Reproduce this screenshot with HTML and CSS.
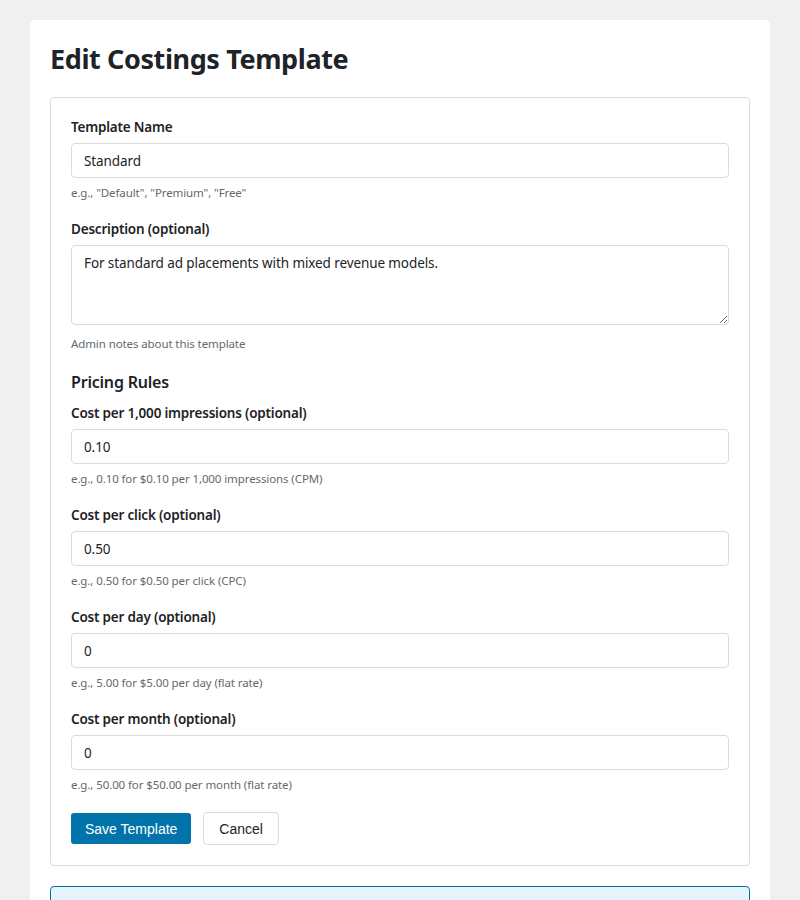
FILE: index.html
```html
<!DOCTYPE html>
<html lang="en">
<head>
<meta charset="utf-8">
<title>Edit Costings Template</title>
<link rel="stylesheet" href="styles.css">
</head>
<body>
<div class="wrap">
  <div class="card">
    <h1 class="page-title">Edit Costings Template</h1>
    <form class="panel">
      <div class="field">
        <label class="field-label" for="tpl-name">Template Name</label>
        <input class="text-input" id="tpl-name" type="text" value="Standard">
        <p class="hint">e.g., "Default", "Premium", "Free"</p>
      </div>
      <div class="field">
        <label class="field-label" for="tpl-desc">Description (optional)</label>
        <textarea class="text-area" id="tpl-desc">For standard ad placements with mixed revenue models.</textarea>
        <p class="hint hint-area">Admin notes about this template</p>
      </div>
      <h3 class="section-title">Pricing Rules</h3>
      <div class="field">
        <label class="field-label" for="cpm">Cost per 1,000 impressions (optional)</label>
        <input class="text-input" id="cpm" type="text" value="0.10">
        <p class="hint">e.g., 0.10 for $0.10 per 1,000 impressions (CPM)</p>
      </div>
      <div class="field">
        <label class="field-label" for="cpc">Cost per click (optional)</label>
        <input class="text-input" id="cpc" type="text" value="0.50">
        <p class="hint">e.g., 0.50 for $0.50 per click (CPC)</p>
      </div>
      <div class="field">
        <label class="field-label" for="cpd">Cost per day (optional)</label>
        <input class="text-input" id="cpd" type="text" value="0">
        <p class="hint">e.g., 5.00 for $5.00 per day (flat rate)</p>
      </div>
      <div class="field">
        <label class="field-label" for="cpmo">Cost per month (optional)</label>
        <input class="text-input" id="cpmo" type="text" value="0">
        <p class="hint">e.g., 50.00 for $50.00 per month (flat rate)</p>
      </div>
      <div class="actions">
        <button type="button" class="btn btn-primary">Save Template</button>
        <button type="button" class="btn btn-secondary">Cancel</button>
      </div>
    </form>
    <div class="notice">
      <p class="notice-text">Templates are applied to new ad placements.</p>
    </div>
  </div>
</div>
</body>
</html>
```

FILE: styles.css
```css
html, body {
  margin: 0;
  padding: 0;
  background: #f0f0f1;
}

body {
  font-family: "Noto Sans", "Open Sans", sans-serif;
  color: #1d2327;
  font-size: 14px;
}

.wrap {
  padding: 20px 30px;
}

.card {
  background: #fff;
  border-radius: 4px;
  padding: 20px;
}

.page-title {
  margin: 0 0 20px;
  font-size: 27px;
  line-height: 37px;
  font-weight: 700;
  letter-spacing: -0.4px;
  color: #1d2327;
}

.panel {
  border: 1px solid #dcdcde;
  border-radius: 4px;
  padding: 20px;
  display: flex;
  flex-direction: column;
}

.field {
  display: flex;
  flex-direction: column;
  margin-bottom: 19px;
}

.field-label {
  font-size: 13.5px;
  font-weight: 600;
  line-height: 19px;
  letter-spacing: -0.2px;
  margin-bottom: 6px;
}

.text-input,
.text-area {
  box-sizing: border-box;
  width: 100%;
  border: 1px solid #dcdcde;
  border-radius: 4px;
  font-family: inherit;
  font-size: 13.5px;
  letter-spacing: -0.1px;
  color: #1d2327;
  background: #fff;
  margin: 0;
}

.text-input {
  height: 35px;
  padding: 0 12px;
}

.text-area {
  height: 80px;
  padding: 7px 12px;
  line-height: 20px;
  resize: vertical;
}

.hint {
  margin: 7px 0 0;
  font-size: 11.5px;
  line-height: 16px;
  letter-spacing: -0.1px;
  color: #646970;
}

.hint-area {
  margin-top: 11px;
}

.section-title {
  margin: 0 0 11px;
  font-size: 16px;
  font-weight: 600;
  line-height: 22px;
  letter-spacing: -0.2px;
}

.actions {
  display: flex;
  align-items: center;
  gap: 12px;
}

.btn {
  font-family: "Liberation Sans", Arial, sans-serif;
  font-size: 14px;
  cursor: pointer;
  box-sizing: border-box;
}

.btn-primary {
  height: 31px;
  padding: 0 14px;
  background: #0073aa;
  color: #fff;
  border: none;
  border-radius: 3px;
}

.btn-secondary {
  height: 33px;
  padding: 0 15px;
  background: #fff;
  color: #1d2327;
  border: 1px solid #dcdcde;
  border-radius: 4px;
}

.notice {
  margin-top: 20px;
  border: 1px solid #0073aa;
  border-radius: 4px;
  background: #e5f3fc;
  padding: 12px 20px;
}

.notice-text {
  margin: 0;
}
```
